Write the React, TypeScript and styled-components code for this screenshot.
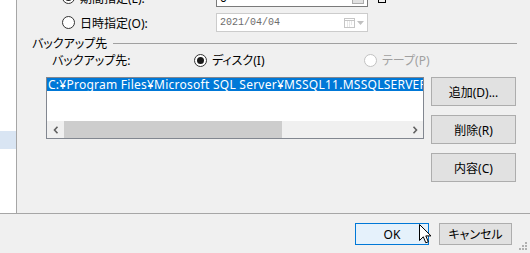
import React from "react";
import styled, { createGlobalStyle } from "styled-components";

const GlobalStyle = createGlobalStyle`
  html, body {
    margin: 0;
    padding: 0;
    background: #f0f0f0;
  }
  body {
    font-family: "Noto Sans", "Noto Sans CJK JP", sans-serif;
    font-size: 12px;
    font-feature-settings: "palt";
    color: #000;
  }
`;

const Window = styled.div`
  position: relative;
  width: 530px;
  height: 253px;
  overflow: hidden;
  background: #f0f0f0;
  display: flex;
  flex-direction: column;
`;

const Top = styled.div`
  height: 213px;
  display: flex;
  border-bottom: 1px solid #a6a6a6;
  overflow: hidden;
`;

const SideList = styled.div`
  width: 16px;
  background: #ffffff;
  border-right: 1px solid #a6a6a6;
  display: flex;
  flex-direction: column;
`;

const SideItem = styled.div<{ $selected?: boolean }>`
  height: ${(p) => (p.$selected ? "18px" : "131px")};
  background: ${(p) => (p.$selected ? "#d9e5f3" : "transparent")};
`;

const Panel = styled.div`
  flex: 1;
  display: flex;
  flex-direction: column;
  overflow: hidden;
`;

const OptionRow = styled.div<{ $first?: boolean }>`
  height: 25px;
  margin-top: ${(p) => (p.$first ? "-15px" : "0")};
  display: flex;
  align-items: center;
  padding-left: 45px;
`;

const RadioLabel = styled.label<{ $width?: number; $disabled?: boolean }>`
  display: flex;
  align-items: center;
  gap: 5px;
  width: ${(p) => (p.$width ? `${p.$width}px` : "auto")};
  color: ${(p) => (p.$disabled ? "#a0a0a0" : "#000")};
  white-space: nowrap;
`;

const RadioCircle = styled.span<{ $checked?: boolean; $disabled?: boolean }>`
  box-sizing: border-box;
  width: 13px;
  height: 13px;
  border-radius: 50%;
  border: 1px solid ${(p) => (p.$disabled ? "#c2c2c2" : "#333")};
  background: #fff;
  display: flex;
  align-items: center;
  justify-content: center;
  flex-shrink: 0;

  &::after {
    content: "";
    width: 7px;
    height: 7px;
    border-radius: 50%;
    background: ${(p) => (p.$checked ? "#1a1a1a" : "transparent")};
  }
`;

const FieldBox = styled.div<{ $disabled?: boolean }>`
  box-sizing: border-box;
  width: 152px;
  height: 19px;
  background: #fff;
  border: 1px solid ${(p) => (p.$disabled ? "#cccccc" : "#7a7a7a")};
  display: flex;
  align-items: center;
  justify-content: space-between;
  padding: 0 3px 0 3px;
`;

const DateText = styled.span`
  font-family: "Liberation Mono", monospace;
  font-size: 10px;
  color: #6d6d6d;
`;

const NumText = styled.span`
  font-size: 12px;
  color: #000;
`;

const DropButton = styled.span`
  box-sizing: border-box;
  width: 12px;
  height: 13px;
  border: 1px solid #adadad;
  background: #e1e1e1;
  display: flex;
  align-items: center;
  justify-content: center;
`;

const CalendarIcons = styled.span`
  display: flex;
  align-items: center;
  gap: 2px;
`;

const SmallSquare = styled.span`
  box-sizing: border-box;
  width: 8px;
  height: 8px;
  border: 1px solid #000;
  margin-left: 10px;
  align-self: flex-start;
  margin-top: 10px;
`;

const GroupHeader = styled.div`
  height: 14px;
  margin-top: 1px;
  display: flex;
  align-items: center;
  padding-left: 15px;
  padding-right: 13px;
  gap: 6px;
`;

const GroupLine = styled.div`
  flex: 1;
  height: 1px;
  background: #a0a0a0;
`;

const DestRow = styled.div`
  height: 20px;
  display: flex;
  align-items: center;
  padding-left: 35px;
`;

const DestLabel = styled.span`
  width: 142px;
`;

const ListArea = styled.div`
  margin-top: 7px;
  padding-left: 29px;
  display: flex;
  align-items: flex-start;
  gap: 7px;
`;

const ListBox = styled.div`
  box-sizing: border-box;
  width: 378px;
  height: 62px;
  border: 1px solid #828790;
  background: #fff;
  display: flex;
  flex-direction: column;
  justify-content: space-between;
  overflow: hidden;
`;

const ListItem = styled.div<{ $selected?: boolean }>`
  height: 13px;
  line-height: 13px;
  white-space: nowrap;
  overflow: hidden;
  letter-spacing: 0.25px;
  background: ${(p) => (p.$selected ? "#0078d7" : "transparent")};
  color: ${(p) => (p.$selected ? "#fff" : "#000")};
  padding-left: 1px;
`;

const HScroll = styled.div`
  height: 17px;
  display: flex;
  background: #f0f0f0;
`;

const ScrollArrow = styled.div`
  width: 17px;
  display: flex;
  align-items: center;
  justify-content: center;
`;

const ScrollTrack = styled.div`
  flex: 1;
  display: flex;
`;

const ScrollThumb = styled.div`
  width: 218px;
  background: #cdcdcd;
`;

const ButtonColumn = styled.div`
  display: flex;
  flex-direction: column;
  gap: 9px;
`;

const Button = styled.button<{ $default?: boolean; $w?: number; $h?: number }>`
  box-sizing: border-box;
  width: ${(p) => p.$w ?? 85}px;
  height: ${(p) => p.$h ?? 29}px;
  padding: 0;
  font: inherit;
  color: #000;
  white-space: nowrap;
  background: ${(p) => (p.$default ? "#e5f1fb" : "#e1e1e1")};
  border: 1px solid ${(p) => (p.$default ? "#0078d7" : "#adadad")};
  display: flex;
  align-items: center;
  justify-content: center;
`;

const Bottom = styled.div`
  flex: 1;
  display: flex;
  justify-content: flex-end;
  align-items: flex-start;
  gap: 10px;
  padding: 9px 18px 0 0;
  position: relative;
`;

const Grip = styled.svg`
  position: absolute;
  right: 2px;
  bottom: 2px;
`;

const Cursor = styled.svg`
  position: absolute;
  left: 419px;
  top: 224px;
`;

const Chevron: React.FC<{ dir: "left" | "right" }> = ({ dir }) => (
  <svg width="6" height="8" viewBox="0 0 6 8">
    <path
      d={dir === "left" ? "M4.5 0.8 L1.5 4 L4.5 7.2" : "M1.5 0.8 L4.5 4 L1.5 7.2"}
      fill="none"
      stroke="#606060"
      strokeWidth="1.6"
    />
  </svg>
);

const App: React.FC = () => {
  return (
    <Window>
      <GlobalStyle />
      <Top>
        <SideList>
          <SideItem />
          <SideItem $selected />
        </SideList>
        <Panel>
          <OptionRow $first>
            <RadioLabel $width={154}>
              <RadioCircle $checked />
              期間指定(L):
            </RadioLabel>
            <FieldBox>
              <NumText>0</NumText>
              <DropButton>
                <svg width="6" height="4" viewBox="0 0 6 4">
                  <path d="M0 0 H6 L3 3.5 Z" fill="#000" />
                </svg>
              </DropButton>
            </FieldBox>
            <SmallSquare />
          </OptionRow>
          <OptionRow>
            <RadioLabel $width={154}>
              <RadioCircle />
              日時指定(O):
            </RadioLabel>
            <FieldBox $disabled>
              <DateText>2021/04/04</DateText>
              <CalendarIcons>
                <svg width="11" height="10" viewBox="0 0 11 10">
                  <rect x="0.5" y="0.5" width="10" height="9" fill="#fff" stroke="#c6c6c6" />
                  <path d="M0.5 2.5 H10.5" stroke="#c6c6c6" />
                  <path
                    d="M3 4 H4 M5 4 H6 M7 4 H8 M3 6 H4 M5 6 H6 M7 6 H8 M3 8 H4 M5 8 H6"
                    stroke="#d0d0d0"
                  />
                </svg>
                <svg width="7" height="4" viewBox="0 0 7 4">
                  <path d="M0 0 H7 L3.5 4 Z" fill="#c0c0c0" />
                </svg>
              </CalendarIcons>
            </FieldBox>
          </OptionRow>
          <GroupHeader>
            <span>バックアップ先</span>
            <GroupLine />
          </GroupHeader>
          <DestRow>
            <DestLabel>バックアップ先:</DestLabel>
            <RadioLabel $width={170}>
              <RadioCircle $checked />
              ディスク(I)
            </RadioLabel>
            <RadioLabel $disabled>
              <RadioCircle $disabled />
              テープ(P)
            </RadioLabel>
          </DestRow>
          <ListArea>
            <ListBox>
              <ListItem $selected>
                C:¥Program Files¥Microsoft SQL Server¥MSSQL11.MSSQLSERVER¥MSSQL¥Backup
              </ListItem>
              <HScroll>
                <ScrollArrow>
                  <Chevron dir="left" />
                </ScrollArrow>
                <ScrollTrack>
                  <ScrollThumb />
                </ScrollTrack>
                <ScrollArrow>
                  <Chevron dir="right" />
                </ScrollArrow>
              </HScroll>
            </ListBox>
            <ButtonColumn>
              <Button>追加(D)...</Button>
              <Button>削除(R)</Button>
              <Button>内容(C)</Button>
            </ButtonColumn>
          </ListArea>
        </Panel>
      </Top>
      <Bottom>
        <Button $default $w={74} $h={22}>
          OK
        </Button>
        <Button $w={73} $h={22}>
          キャンセル
        </Button>
        <Grip width="9" height="9" viewBox="0 0 9 9">
          <g fill="#b0b0b0">
            <rect x="6" y="0" width="2" height="2" />
            <rect x="3" y="3" width="2" height="2" />
            <rect x="6" y="3" width="2" height="2" />
            <rect x="0" y="6" width="2" height="2" />
            <rect x="3" y="6" width="2" height="2" />
            <rect x="6" y="6" width="2" height="2" />
          </g>
        </Grip>
      </Bottom>
      <Cursor width="13" height="21" viewBox="0 0 13 21">
        <path
          d="M0.5 0.5 V16.5 L4.3 12.8 L6.8 18.8 L9.3 17.8 L6.8 11.9 H12 Z"
          fill="#fff"
          stroke="#000"
          strokeWidth="1"
          strokeLinejoin="round"
        />
      </Cursor>
    </Window>
  );
};

export default App;
